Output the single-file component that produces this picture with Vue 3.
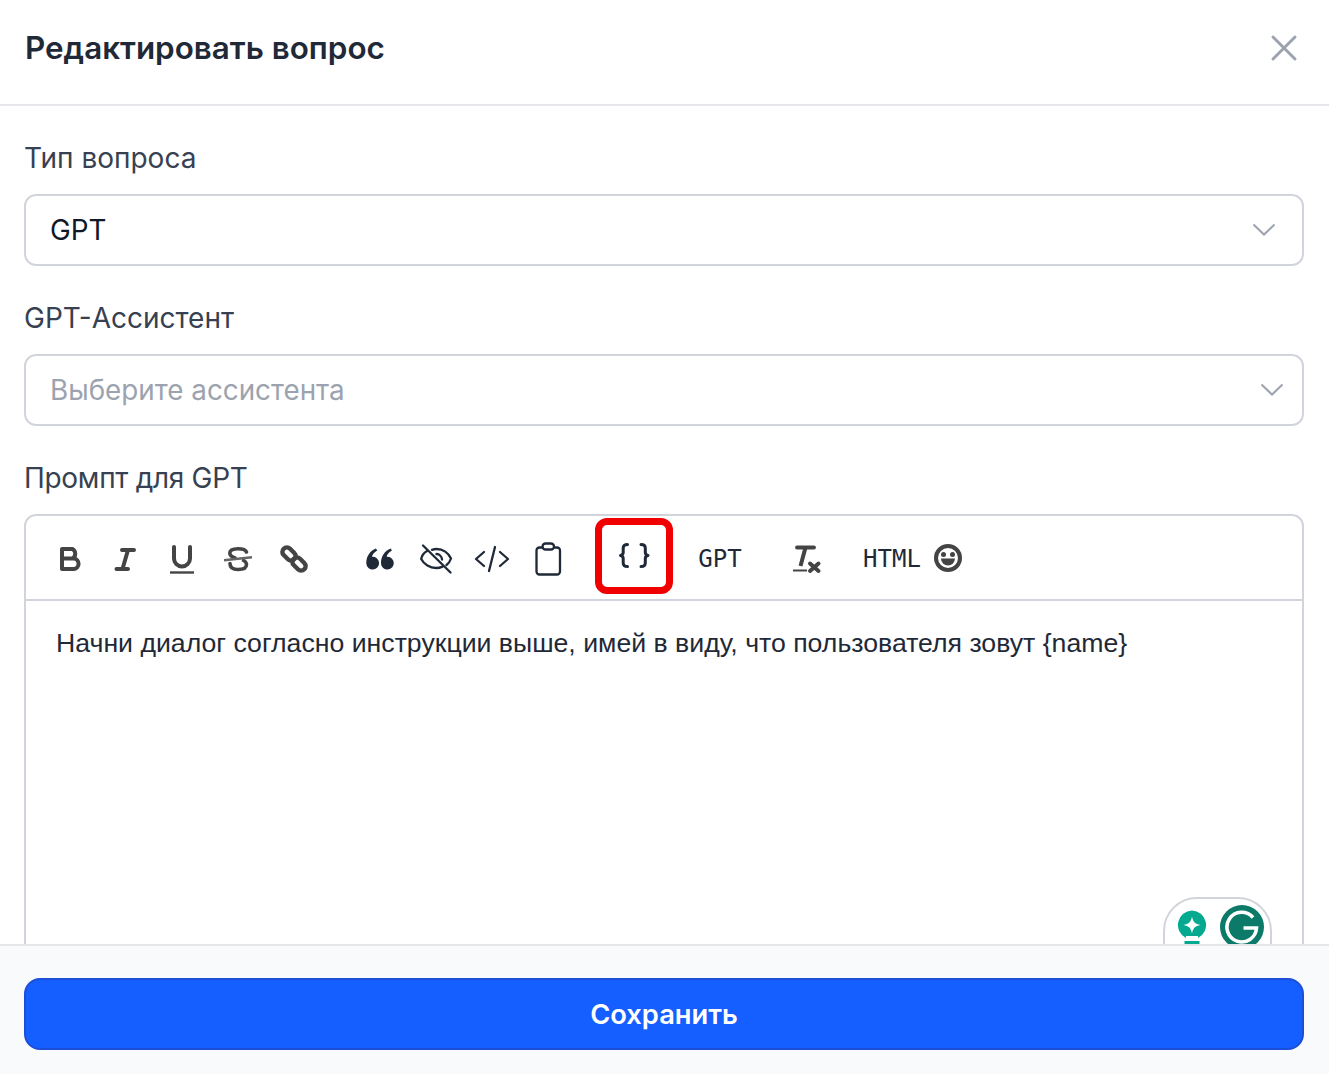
<script setup>
const rows = [
  { label: 'Тип вопроса', value: 'GPT', placeholder: false, pad: 'tight' },
  { label: 'GPT-Ассистент', value: 'Выберите ассистента', placeholder: true, pad: 'wide' }
]
</script>

<template>
  <div class="modal">
    <header class="head">
      <h1 class="title">Редактировать вопрос</h1>
      <svg class="close" width="28" height="28" viewBox="0 0 28 28" fill="none" stroke="#9ca3af" stroke-width="3" stroke-linecap="round">
        <path d="M3 3L25 25M25 3L3 25" />
      </svg>
    </header>

    <main class="body">
      <div v-for="r in rows" :key="r.label" class="field">
        <div class="label">{{ r.label }}</div>
        <div class="select" :class="r.pad">
          <span :class="{ ph: r.placeholder }">{{ r.value }}</span>
          <svg width="24" height="14" viewBox="0 0 24 14" fill="none" stroke="#9ca3af" stroke-width="2">
            <path d="M1.5 1.500L12 11.500L22.5 1.500" />
          </svg>
        </div>
      </div>

      <div class="field">
        <div class="label narrow">Промпт для GPT</div>
        <div class="editor">
          <div class="toolbar">
            <div class="group">
              <span class="btn"><svg width="32" height="32" viewBox="0 0 32 32" fill="none" stroke="#444" stroke-width="4" stroke-linejoin="round" stroke-linecap="round"><path d="M8 6H18.5A5.5 5.5 0 0 1 18.5 15.5H8ZM8 15.5H20A5.3 5.3 0 0 1 20 26H8Z" /></svg></span>
              <span class="btn"><svg width="32" height="32" viewBox="0 0 32 32" fill="none" stroke="#444" stroke-width="4" stroke-linecap="round"><path d="M12 7H24M6.500 26H18M18 7L12.500 26" /></svg></span>
              <span class="btn"><svg width="32" height="32" viewBox="0 0 32 32" fill="none" stroke="#444" stroke-linecap="round"><path stroke-width="4" d="M8 4V15.500A8 8 0 0 0 24 15.500V4" /><path stroke-width="2.400" stroke-linecap="butt" d="M4 29.500H28" /></svg></span>
              <span class="btn"><svg width="32" height="32" viewBox="0 0 32 32" fill="none" stroke="#444" stroke-linecap="round"><path stroke-width="3.600" d="M24.500 9C23.500 6.500 20.500 5.800 16 5.800C11 5.800 7.800 7.500 7.800 10.300C7.800 13 10 14 13 15M8 20.500C8 24.500 11 26.500 16 26.500C21 26.500 24.500 24.800 24.500 21.500C24.500 19.500 23.500 18.500 21.500 17.500" /><path stroke-width="2.400" stroke="#666" stroke-linecap="butt" d="M2 17.300L30 14.300" /></svg></span>
              <span class="btn"><svg width="32" height="32" viewBox="0 0 32 32" fill="none" stroke="#444" stroke-width="4.400"><rect x="3.500" y="6.500" width="15" height="9" rx="4.500" transform="rotate(45 11 11)" /><rect x="13.500" y="16.500" width="15" height="9" rx="4.500" transform="rotate(45 21 21)" /></svg></span>
            </div>
            <div class="group">
              <span class="btn"><svg width="32" height="32" viewBox="0 0 32 32" fill="#1f2937"><path d="M2.300 20.500C2.300 13 6 8 12 5.500L13.200 7.500C10 9.300 8.400 11.300 8 13.800A6.400 6.400 0 1 1 2.300 20.500Z" /><path d="M17 20.500C17 13 20.700 8 26.700 5.500L27.900 7.500C24.700 9.300 23.100 11.300 22.700 13.800A6.400 6.400 0 1 1 17 20.500Z" /></svg></span>
              <span class="btn"><svg width="34" height="32" viewBox="0 0 34 32" fill="none" stroke="#1f2937" stroke-width="2.300" stroke-linecap="round"><path d="M8 8C4.500 10 2.800 13 2.200 16C5 21.500 11 25 17 25C19.500 25 21.500 24.500 23.500 23.600M13 6.800C14.500 6.300 16 6 17.500 6C24 6 29.500 10 32 15.500C31 18.500 29.500 20.500 27.500 22" /><path d="M17.500 11A5.800 5.800 0 0 1 23 16.500" /><path d="M4 2.500L31.500 29.500" /></svg></span>
              <span class="btn"><svg width="36" height="32" viewBox="0 0 36 32" fill="none" stroke="#1f2937" stroke-width="2.300" stroke-linecap="round" stroke-linejoin="round"><path d="M10 9L2 16L10 23M26 9L34 16L26 23M21 4L15 28" /></svg></span>
              <span class="btn"><svg width="32" height="36" viewBox="0 0 32 36" fill="none" stroke="#1f2937" stroke-width="2.300" stroke-linecap="round" stroke-linejoin="round"><path d="M10.500 6.500H7.500A3 3 0 0 0 4.500 9.500V30.500A3 3 0 0 0 7.500 33.500H25A3 3 0 0 0 28 30.500V9.500A3 3 0 0 0 25 6.500H22" /><rect x="10.500" y="2.500" width="11.500" height="6" rx="3" /></svg></span>
            </div>
            <div class="group">
              <span class="btn"><svg width="32" height="32" viewBox="0 0 32 32" fill="none" stroke="#1f2937" stroke-width="3" stroke-linecap="round" stroke-linejoin="round"><path d="M9.500 1.500C6.500 1.500 5.200 2.500 5.200 5V9.500C5.200 11 4.500 12 2.500 12.500C4.500 13 5.200 14 5.200 15.500V20C5.200 22.500 6.500 23.500 9.500 23.500M23 1.500C26 1.500 27.300 2.500 27.300 5V9.500C27.300 11 28 12 30 12.500C28 13 27.300 14 27.300 15.500V20C27.300 22.500 26 23.500 23 23.500" /></svg></span>
            </div>
            <div class="group">
              <span class="btn mono">GPT</span>
            </div>
            <div class="group">
              <span class="btn"><svg width="32" height="32" viewBox="0 0 32 32" fill="none" stroke="#444" stroke-linecap="round"><path stroke-width="3.800" d="M7 4.500H24" /><path stroke-width="4" stroke-linecap="butt" d="M15.500 4.500L10.500 23" /><path stroke-width="2" stroke-linecap="butt" d="M3 27.500H17" /><path stroke-width="4" d="M20 20.500L28.500 28M28.500 20.500L20 28" /></svg></span>
            </div>
            <div class="group">
              <span class="btn mono">HTML</span>
              <span class="btn"><svg width="32" height="32" viewBox="0 0 32 32"><circle cx="16" cy="15" r="12" fill="none" stroke="#444" stroke-width="4" /><circle cx="11.500" cy="11.500" r="2.500" fill="#444" /><circle cx="20.500" cy="11.500" r="2.500" fill="#444" /><path d="M9 15.500H23A7 7 0 0 1 9 15.500Z" fill="#444" /></svg></span>
            </div>
            <div class="mark"></div>
          </div>
          <div class="content">
            Начни диалог согласно инструкции выше, имей в виду, что пользователя зовут {name}
            <div class="widget">
              <svg width="32" height="46" viewBox="0 0 32 46">
                <path d="M16 0.500A14.500 14.500 0 0 1 22 28V26H10V28A14.500 14.500 0 0 1 16 0.500Z" fill="#05a98f" />
                <path d="M16 6.500C17 12 19 14 24.500 15C19 16 17 18 16 23.500C15 18 13 16 7.500 15C13 14 15 12 16 6.500Z" fill="#fff" />
                <path d="M8.500 31H23.500V42H8.500Z" fill="#05a98f" />
              </svg>
              <svg class="g" width="44" height="44" viewBox="0 0 44 44">
                <circle cx="22" cy="22" r="22" fill="#0b7a68" />
                <path d="M33 12.500A14.800 14.800 0 1 0 36.500 23H23.500" fill="none" stroke="#fff" stroke-width="3.600" />
              </svg>
            </div>
          </div>
        </div>
      </div>
    </main>

    <footer class="foot">
      <button class="save">Сохранить</button>
    </footer>
  </div>
</template>

<style scoped>
.modal {
  width: 1329px;
  height: 1074px;
  display: flex;
  flex-direction: column;
  overflow: hidden;
  background: #fff;
  font-family: Inter, "Noto Sans", sans-serif;
  color: #1f2937;
}
.head {
  height: 106px;
  box-sizing: border-box;
  flex: none;
  display: flex;
  align-items: center;
  justify-content: space-between;
  padding: 0 31px 8px 25px;
  border-bottom: 2px solid #e5e7eb;
}
.title {
  margin: 0;
  font-size: 31.4px;
  font-weight: 600;
  color: #1f2937;
}
.close {
  display: block;
}
.body {
  flex: 1;
  min-height: 0;
  overflow: hidden;
  padding: 35px 25px 0 24px;
  display: flex;
  flex-direction: column;
  gap: 35px;
}
.field {
  display: flex;
  flex-direction: column;
  gap: 19px;
  flex: none;
}
.label {
  font-size: 28px;
  line-height: 34px;
  color: #374151;
}
.narrow {
  letter-spacing: -0.29px;
}
.select {
  height: 72px;
  box-sizing: border-box;
  border: 2px solid #d1d5db;
  border-radius: 12px;
  display: flex;
  align-items: center;
  justify-content: space-between;
  padding: 0 26px 0 24px;
  font-size: 27.8px;
  color: #111827;
}
.select.wide {
  padding-right: 18px;
}
.ph {
  color: #9ca3af;
}
.editor {
  border: 2px solid #d1d5db;
  border-radius: 12px;
  height: 500px;
  box-sizing: border-box;
}
.toolbar {
  position: relative;
  height: 85px;
  box-sizing: border-box;
  border-bottom: 2px solid #d1d5db;
  display: flex;
  align-items: center;
  gap: 30px;
  padding: 2px 0 0 16px;
}
.group {
  display: flex;
}
.btn {
  width: 56px;
  height: 56px;
  flex: none;
  display: flex;
  align-items: center;
  justify-content: center;
}
.mono {
  font-family: "DejaVu Sans Mono", monospace;
  font-size: 24px;
  color: #1f2937;
}
.mark {
  position: absolute;
  left: 569px;
  top: 2px;
  width: 78px;
  height: 76px;
  box-sizing: border-box;
  border: 7px solid #f00000;
  border-radius: 12px;
}
.content {
  position: relative;
  padding: 24px 30px;
  font-family: "Liberation Sans", Arial, sans-serif;
  font-size: 26.67px;
  line-height: 36px;
  color: #1f2937;
}
.widget {
  position: absolute;
  left: 1137px;
  top: 296px;
  width: 109px;
  height: 80px;
  box-sizing: border-box;
  border: 2px solid #d1d5db;
  border-radius: 34px;
  display: flex;
  gap: 12px;
  padding: 11px 0 0 11px;
  background: #fff;
}
.g {
  margin-top: -5px;
}
.foot {
  flex: none;
  height: 130px;
  box-sizing: border-box;
  background: #f9fafb;
  border-top: 2px solid #e5e7eb;
  padding: 32px 25px 0 24px;
}
.save {
  display: block;
  width: 100%;
  height: 72px;
  border: 2px solid #1d4ed8;
  border-radius: 16px;
  background: #155eff;
  color: #fff;
  font: 600 27.3px Inter, sans-serif;
}
</style>
